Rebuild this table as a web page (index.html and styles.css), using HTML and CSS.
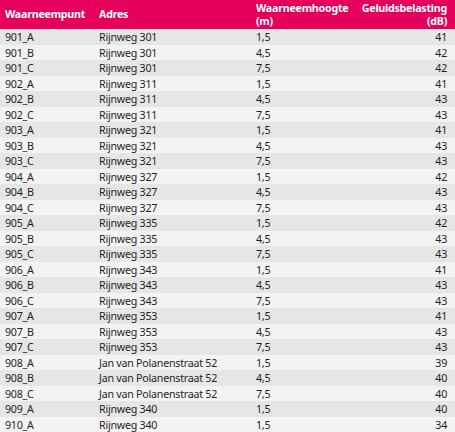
FILE: index.html
```html
<!DOCTYPE html>
<html lang="nl">
<head>
<meta charset="utf-8">
<title>Geluidsbelasting</title>
<link rel="stylesheet" href="styles.css">
</head>
<body>
<div class="grid" role="table">
  <div class="row head" role="row">
    <div class="cell" role="columnheader">Waarneempunt</div>
    <div class="cell" role="columnheader">Adres</div>
    <div class="cell" role="columnheader">Waarneemhoogte<br>(m)</div>
    <div class="cell num" role="columnheader">Geluidsbelasting<br>(dB)</div>
  </div>
  <div class="row"><div class="cell">901_A</div><div class="cell">Rijnweg 301</div><div class="cell">1,5</div><div class="cell num">41</div></div>
  <div class="row"><div class="cell">901_B</div><div class="cell">Rijnweg 301</div><div class="cell">4,5</div><div class="cell num">42</div></div>
  <div class="row"><div class="cell">901_C</div><div class="cell">Rijnweg 301</div><div class="cell">7,5</div><div class="cell num">42</div></div>
  <div class="row"><div class="cell">902_A</div><div class="cell">Rijnweg 311</div><div class="cell">1,5</div><div class="cell num">41</div></div>
  <div class="row"><div class="cell">902_B</div><div class="cell">Rijnweg 311</div><div class="cell">4,5</div><div class="cell num">43</div></div>
  <div class="row"><div class="cell">902_C</div><div class="cell">Rijnweg 311</div><div class="cell">7,5</div><div class="cell num">43</div></div>
  <div class="row"><div class="cell">903_A</div><div class="cell">Rijnweg 321</div><div class="cell">1,5</div><div class="cell num">41</div></div>
  <div class="row"><div class="cell">903_B</div><div class="cell">Rijnweg 321</div><div class="cell">4,5</div><div class="cell num">43</div></div>
  <div class="row"><div class="cell">903_C</div><div class="cell">Rijnweg 321</div><div class="cell">7,5</div><div class="cell num">43</div></div>
  <div class="row"><div class="cell">904_A</div><div class="cell">Rijnweg 327</div><div class="cell">1,5</div><div class="cell num">42</div></div>
  <div class="row"><div class="cell">904_B</div><div class="cell">Rijnweg 327</div><div class="cell">4,5</div><div class="cell num">43</div></div>
  <div class="row"><div class="cell">904_C</div><div class="cell">Rijnweg 327</div><div class="cell">7,5</div><div class="cell num">43</div></div>
  <div class="row"><div class="cell">905_A</div><div class="cell">Rijnweg 335</div><div class="cell">1,5</div><div class="cell num">42</div></div>
  <div class="row"><div class="cell">905_B</div><div class="cell">Rijnweg 335</div><div class="cell">4,5</div><div class="cell num">43</div></div>
  <div class="row"><div class="cell">905_C</div><div class="cell">Rijnweg 335</div><div class="cell">7,5</div><div class="cell num">43</div></div>
  <div class="row"><div class="cell">906_A</div><div class="cell">Rijnweg 343</div><div class="cell">1,5</div><div class="cell num">41</div></div>
  <div class="row"><div class="cell">906_B</div><div class="cell">Rijnweg 343</div><div class="cell">4,5</div><div class="cell num">43</div></div>
  <div class="row"><div class="cell">906_C</div><div class="cell">Rijnweg 343</div><div class="cell">7,5</div><div class="cell num">43</div></div>
  <div class="row"><div class="cell">907_A</div><div class="cell">Rijnweg 353</div><div class="cell">1,5</div><div class="cell num">41</div></div>
  <div class="row"><div class="cell">907_B</div><div class="cell">Rijnweg 353</div><div class="cell">4,5</div><div class="cell num">43</div></div>
  <div class="row"><div class="cell">907_C</div><div class="cell">Rijnweg 353</div><div class="cell">7,5</div><div class="cell num">43</div></div>
  <div class="row"><div class="cell">908_A</div><div class="cell">Jan van Polanenstraat 52</div><div class="cell">1,5</div><div class="cell num">39</div></div>
  <div class="row"><div class="cell">908_B</div><div class="cell">Jan van Polanenstraat 52</div><div class="cell">4,5</div><div class="cell num">40</div></div>
  <div class="row"><div class="cell">908_C</div><div class="cell">Jan van Polanenstraat 52</div><div class="cell">7,5</div><div class="cell num">40</div></div>
  <div class="row"><div class="cell">909_A</div><div class="cell">Rijnweg 340</div><div class="cell">1,5</div><div class="cell num">40</div></div>
  <div class="row"><div class="cell">910_A</div><div class="cell">Rijnweg 340</div><div class="cell">1,5</div><div class="cell num">34</div></div>
</div>
</body>
</html>
```
FILE: styles.css
```css
html, body {
  margin: 0;
  padding: 0;
  background: #f3f3f3;
}
body {
  font-family: "Noto Sans", "Open Sans", sans-serif;
  font-size: 10.7px;
  letter-spacing: -0.25px;
  color: #1f1f1f;
}
.grid {
  display: flex;
  flex-direction: column;
  width: 455px;
}
.row {
  display: grid;
  grid-template-columns: 94px 157px 105px 1fr;
  box-sizing: border-box;
  height: 15.5px;
  padding-top: 1px;
  line-height: 14.5px;
}
.row:nth-child(even) { background: #e6e6e6; }
.row:nth-child(odd) { background: #f3f3f3; }
.row.head {
  height: 29px;
  padding-top: 0;
  line-height: 13px;
  background: #e5005c;
  color: #ffffff;
  font-weight: bold;
}
.row.head .cell {
  display: flex;
  flex-direction: column;
  justify-content: center;
}
.row.head .cell.num {
  align-items: flex-end;
  text-align: right;
}
.cell {
  padding-left: 5px;
  white-space: nowrap;
}
.cell.num {
  text-align: right;
  padding-left: 0;
  padding-right: 8px;
}
```
